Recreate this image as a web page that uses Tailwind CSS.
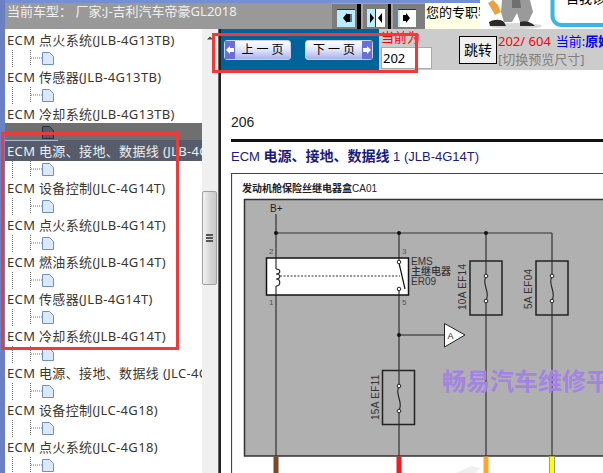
<!DOCTYPE html>
<html>
<head>
<meta charset="utf-8">
<script src="https://cdn.jsdelivr.net/npm/@tailwindcss/browser@4"></script>
</head>
<body class="m-0 bg-white">
<div class="relative w-[603px] h-[473px] overflow-hidden flex flex-col bg-white font-['Noto_Sans','Noto_Sans_CJK_SC',sans-serif]">

  <!-- top bar -->
  <header class="h-[29px] shrink-0 flex">
    <div class="w-[5px] bg-[#6b80c4]"></div>
    <div class="w-[327px] flex flex-col">
      <div class="h-[3px] bg-[#7390d6]"></div>
      <div class="flex-1 bg-[#999999] pl-[2px] text-[13px] leading-[16px] text-[#f0f0f0] whitespace-nowrap">当前车型： 厂家:J-吉利汽车帝豪GL2018</div>
    </div>
    <div class="w-[93px] flex flex-col">
      <div class="h-[3px] bg-[#7390d6]"></div>
      <div class="flex-1 bg-[#a6a6a6] flex pt-[1px] gap-[2px]">
        <div class="w-[29px] h-[25px] flex">
          <div class="w-[25px] bg-[#7d7d7d] pl-[5px] pt-[5px]">
            <svg width="18" height="18" viewBox="0 0 18 18" class="block"><rect width="18" height="18" fill="#b9ecff"/><rect width="18" height="1" fill="#333"/><path d="M6 9l4-5v10zM10 5h3v8h-3z" fill="#000"/><path d="M14 5l0 8" stroke="#000"/></svg>
          </div>
          <div class="w-[4px] bg-black"></div>
        </div>
        <div class="w-[28px] h-[25px] flex">
          <div class="w-[25px] bg-[#7d7d7d] pl-[4px] pt-[5px]">
            <svg width="18" height="18" viewBox="0 0 18 18" class="block"><rect width="9" height="18" fill="#b9ecff"/><rect x="9" width="9" height="18" fill="#fff"/><rect x="8" width="1" height="18" fill="#333"/><path d="M3 4v10l4-5zM15 4v10l-4-5z" fill="#000"/></svg>
          </div>
          <div class="w-[3px] bg-black"></div>
        </div>
        <div class="w-[32px] h-[25px] bg-[#7d7d7d] pl-[5px] pt-[5px]">
          <svg width="18" height="18" viewBox="0 0 18 18" class="block"><rect width="18" height="18" fill="#fff"/><rect width="2" height="18" fill="#b9ecff"/><rect y="0" width="18" height="1" fill="#333"/><path d="M12 9l-4-5v10zM8 6H5v6h3z" fill="#000"/></svg>
        </div>
      </div>
    </div>
    <div class="w-[55px] flex flex-col overflow-hidden">
      <div class="h-[3px] bg-[#7390d6]"></div>
      <div class="flex-1 bg-[#ffffe8] pl-[1px] text-[13px] leading-[18px] text-black whitespace-nowrap">您的专职客服</div>
    </div>
    <div class="flex-1 relative overflow-hidden bg-white">
      <svg width="123" height="29" viewBox="0 0 123 29" class="block">
        <ellipse cx="36" cy="26" rx="26" ry="3" fill="#d8d8d8"/>
        <path d="M22 0h28l3 12-5 10H40l-3-9-5 9H24l-3-10z" fill="#9a9a9a"/>
        <path d="M32 0h8l1 8h-9z" fill="#6f6f6f"/>
        <path d="M8 3l5-3 5 5 3 7-6 3z" fill="#e9a441"/>
        <path d="M9 22c5-3 12-3 15 0l2 4H10zM40 22c5-2 11 0 15 4H40z" fill="#2e2a28"/>
        <rect x="72.500" y="-12" width="60" height="37" rx="9" fill="#fff" stroke="#38b6e8" stroke-width="4"/>
      </svg>
      <span class="absolute left-[86px] top-[-9px] text-[13px] leading-[14px] text-black whitespace-nowrap">自我诊</span>
    </div>
  </header>

  <!-- main -->
  <main class="flex-1 flex min-h-0">
    <div class="w-[5px] bg-[#6b80c4]"></div>

    <!-- tree -->
    <nav class="w-[197px] pt-[1px] overflow-hidden text-[13px] tracking-[0.35px] leading-[20px] text-[#3b3630] whitespace-nowrap">
      <div class="h-[20px] pl-[2px]">ECM 点火系统(JLB-4G13TB)</div>
      <svg width="60" height="17" class="block"><path d="M7.500 0v17M25.500 0v16M26 8h11" stroke="#777" stroke-dasharray="1 1"/><path d="M37.500 2.500h7l4 4v8h-11z" fill="#dce9fb" stroke="#6f8fca"/></svg>
      <div class="h-[20px] pl-[2px]">ECM 传感器(JLB-4G13TB)</div>
      <svg width="60" height="17" class="block"><path d="M7.500 0v17M25.500 0v16M26 8h11" stroke="#777" stroke-dasharray="1 1"/><path d="M37.500 2.500h7l4 4v8h-11z" fill="#dce9fb" stroke="#6f8fca"/></svg>
      <div class="h-[20px] pl-[2px]">ECM 冷却系统(JLB-4G13TB)</div>
      <svg width="197" height="18" viewBox="0 -1 197 18" class="block -mt-[1px] bg-[#6f6f6f]"><path d="M37.500 2.500h7l4 4v8h-11z" fill="#555b68" stroke="#2a3040"/><rect y="16" width="197" height="1" fill="#565c6c"/><rect y="16" width="53" height="1" fill="#a9b6d6"/></svg>
      <div class="h-[20px] pl-[2px] bg-[#565c6c] text-[#f0f0f0]">ECM 电源、接地、数据线 (JLB-4G14T)</div>
      <svg width="60" height="17" class="block"><path d="M7.500 0v17M25.500 0v16M26 8h11" stroke="#777" stroke-dasharray="1 1"/><path d="M37.500 2.500h7l4 4v8h-11z" fill="#dce9fb" stroke="#6f8fca"/></svg>
      <div class="h-[20px] pl-[2px]">ECM 设备控制(JLC-4G14T)</div>
      <svg width="60" height="17" class="block"><path d="M7.500 0v17M25.500 0v16M26 8h11" stroke="#777" stroke-dasharray="1 1"/><path d="M37.500 2.500h7l4 4v8h-11z" fill="#dce9fb" stroke="#6f8fca"/></svg>
      <div class="h-[20px] pl-[2px]">ECM 点火系统(JLB-4G14T)</div>
      <svg width="60" height="17" class="block"><path d="M7.500 0v17M25.500 0v16M26 8h11" stroke="#777" stroke-dasharray="1 1"/><path d="M37.500 2.500h7l4 4v8h-11z" fill="#dce9fb" stroke="#6f8fca"/></svg>
      <div class="h-[20px] pl-[2px]">ECM 燃油系统(JLB-4G14T)</div>
      <svg width="60" height="17" class="block"><path d="M7.500 0v17M25.500 0v16M26 8h11" stroke="#777" stroke-dasharray="1 1"/><path d="M37.500 2.500h7l4 4v8h-11z" fill="#dce9fb" stroke="#6f8fca"/></svg>
      <div class="h-[20px] pl-[2px]">ECM 传感器(JLB-4G14T)</div>
      <svg width="60" height="17" class="block"><path d="M7.500 0v17M25.500 0v16M26 8h11" stroke="#777" stroke-dasharray="1 1"/><path d="M37.500 2.500h7l4 4v8h-11z" fill="#dce9fb" stroke="#6f8fca"/></svg>
      <div class="h-[20px] pl-[2px]">ECM 冷却系统(JLB-4G14T)</div>
      <svg width="60" height="17" class="block"><path d="M7.500 0v17M25.500 0v16M26 8h11" stroke="#777" stroke-dasharray="1 1"/><path d="M37.500 2.500h7l4 4v8h-11z" fill="#dce9fb" stroke="#6f8fca"/></svg>
      <div class="h-[20px] pl-[2px]">ECM 电源、接地、数据线 (JLC-4G14T)</div>
      <svg width="60" height="17" class="block"><path d="M7.500 0v17M25.500 0v16M26 8h11" stroke="#777" stroke-dasharray="1 1"/><path d="M37.500 2.500h7l4 4v8h-11z" fill="#dce9fb" stroke="#6f8fca"/></svg>
      <div class="h-[20px] pl-[2px]">ECM 设备控制(JLC-4G18)</div>
      <svg width="60" height="17" class="block"><path d="M7.500 0v17M25.500 0v16M26 8h11" stroke="#777" stroke-dasharray="1 1"/><path d="M37.500 2.500h7l4 4v8h-11z" fill="#dce9fb" stroke="#6f8fca"/></svg>
      <div class="h-[20px] pl-[2px]">ECM 点火系统(JLC-4G18)</div>
      <svg width="60" height="17" class="block"><path d="M7.500 0v17M25.500 0v16M26 8h11" stroke="#777" stroke-dasharray="1 1"/><path d="M37.500 2.500h7l4 4v8h-11z" fill="#dce9fb" stroke="#6f8fca"/></svg>
    </nav>

    <!-- scrollbar -->
    <div class="w-[16px] bg-[#f0f0f0] flex flex-col items-center">
      <svg width="16" height="17" class="block shrink-0"><path d="M5 10.500l3-3 3 3z" fill="#444"/></svg>
      <div class="mt-[145px] w-[15px] h-[94px] -ml-[1px] border border-[#a0a0a0] rounded-[2px] bg-gradient-to-r from-[#f2f2f2] via-[#d8d8d8] to-[#c8c8c8] flex flex-col justify-center items-center gap-[1px]">
        <div class="w-[7px] h-[2px] bg-[#555]"></div>
        <div class="w-[7px] h-[2px] bg-[#555]"></div>
        <div class="w-[7px] h-[2px] bg-[#555]"></div>
      </div>
    </div>
    <div class="w-[3px] bg-[#222222] border-l border-[#666]"></div>

    <!-- right -->
    <section class="w-[382px] flex flex-col">
      <div class="h-[41px] shrink-0 flex bg-[#cccccc]">
        <div class="w-[158px] bg-[#00649a] flex items-start pl-[3px] pt-[11px] gap-[14px]">
          <button class="w-[67px] h-[20px] rounded-[3px] border border-[#c8d0f0] bg-gradient-to-b from-[#ffffff] via-[#dfe4fb] to-[#a9b2ec] flex items-center text-[12px] leading-[18px] text-black">
            <span class="w-[10px] h-full bg-[#6a6fd8] flex items-center justify-center"><svg width="8" height="8" viewBox="0 0 8 8"><path d="M0 4l4-4v2h4v4H4v2z" fill="#fff"/></svg></span>
            <span class="flex-1 text-center">上 一 页</span>
          </button>
          <button class="w-[68px] h-[20px] rounded-[3px] border border-[#c8d0f0] bg-gradient-to-b from-[#ffffff] via-[#dfe4fb] to-[#a9b2ec] flex items-center text-[12px] leading-[18px] text-black">
            <span class="flex-1 text-center">下 一 页</span>
            <span class="w-[10px] h-full bg-[#6a6fd8] flex items-center justify-center"><svg width="8" height="8" viewBox="0 0 8 8"><path d="M8 4L4 0v2H0v4h4v2z" fill="#fff"/></svg></span>
          </button>
        </div>
        <div class="w-[51px] ml-[2px] flex flex-col">
          <div class="h-[18px] text-[13px] leading-[17px] text-[#ff0000] whitespace-nowrap">当前为</div>
          <div class="h-[22px] bg-white border border-[#aaaaaa] pl-[1px] text-[13px] leading-[20px] text-black">202</div>
        </div>
        <button class="ml-[27px] mt-[7px] w-[38px] h-[28px] bg-[#f0f0f0] border border-black text-[14px] leading-[26px] text-black">跳转</button>
        <div class="ml-[1px] pt-[3px] flex-1 overflow-hidden whitespace-nowrap text-[13px] leading-[18px]">
          <div><span class="text-[#ff0000]">202/ 604</span><span class="text-[#0000ff] ml-[5px]">当前:<b>原始资料</b></span></div>
          <div class="text-[#808080]">[切换预览尺寸]</div>
        </div>
      </div>

      <!-- document -->
      <div class="flex-1 min-h-0 bg-white pl-[10px] overflow-hidden font-['Liberation_Sans','Noto_Sans_CJK_SC',sans-serif]">
        <div class="mt-[42px] h-[20px] text-[14px] leading-[20px] text-[#222]">206</div>
        <div class="mt-[7px] h-[3px] bg-[#111111]"></div>
        <div class="mt-[4px] h-[18px] text-[13px] leading-[18px] text-[#1a1a80] whitespace-nowrap">ECM <b class="text-[14px] font-['Noto_Sans_CJK_SC']">电源、接地、数据线</b> 1 (JLB-4G14T)</div>
        <svg width="372" height="302" viewBox="232 171 372 302" class="block mt-[8px]">
          <path d="M232.500 473V172.500H604" fill="none" stroke="#444" stroke-width="1.200"/>
          <text x="243" y="190.500" font-size="10" font-weight="700" fill="#222" font-family="Noto Sans CJK SC">发动机舱保险丝继电器盒<tspan font-family="Liberation Sans" font-weight="400">CA01</tspan></text>
          <rect x="245.500" y="198.500" width="370" height="256.500" fill="#b0b0b0" stroke="#333" stroke-width="1.500"/>
          <!-- wires out -->
          <rect x="274.500" y="455.500" width="5" height="18" fill="#7b4a25"/>
          <rect x="397.500" y="455.500" width="5" height="18" fill="#ee1c25"/>
          <rect x="484.500" y="455.500" width="5" height="18" fill="#ffa52c"/>
          <rect x="550.500" y="455.500" width="5" height="18" fill="#ffff00"/>
          <path d="M550.500 455v18M555.500 455v18" stroke="#999" stroke-width="1"/>
          <path d="M455 473l17-8 9 2-5 6z" fill="#efefef"/>
          <!-- lines -->
          <path d="M277 213V455M400 232V455M487 232V455M553 232V455M277 232H553" fill="none" stroke="#333" stroke-width="1.200"/>
          <circle cx="277" cy="232" r="2" fill="#111"/><circle cx="400" cy="232" r="2" fill="#111"/><circle cx="487" cy="232" r="2" fill="#111"/><circle cx="400" cy="334" r="2" fill="#111"/>
          <path d="M400 334H445" stroke="#222"/>
          <path d="M445.500 322.500V346L466 334z" fill="#fff" stroke="#222"/>
          <text x="448.500" y="338" font-size="9" fill="#222">A</text>
          <text x="271" y="210.500" font-size="10" fill="#222">B+</text>
          <text x="270" y="253" font-size="8" fill="#555">2</text><text x="403" y="253" font-size="8" fill="#555">3</text>
          <text x="270" y="304" font-size="8" fill="#555">1</text><text x="403" y="304" font-size="8" fill="#555">5</text>
          <!-- relay -->
          <rect x="267.500" y="257" width="142" height="37" fill="#fff" stroke="#111" stroke-width="1.500"/>
          <path d="M277 257v11M277 285v9M400 257v4M400 288v6" stroke="#333" stroke-width="1.200"/>
          <path d="M277 268c5 0 5 5 0 5c5 0 5 5 0 5c5 0 5 7 0 7" fill="none" stroke="#222" stroke-width="1.200"/>
          <path d="M281 275H401" stroke="#333" stroke-dasharray="2 1.500"/>
          <path d="M400 262L406 288" stroke="#111" stroke-width="1.200"/>
          <circle cx="400" cy="261" r="1.800" fill="#fff" stroke="#222"/><circle cx="400" cy="288" r="1.800" fill="#fff" stroke="#222"/>
          <text x="412" y="264" font-size="10" fill="#333">EMS</text>
          <text x="412" y="274" font-size="10" font-weight="500" fill="#333" font-family="Noto Sans CJK SC">主继电器</text>
          <text x="412" y="284" font-size="10" fill="#333">ER09</text>
          <!-- fuses -->
          <rect x="471" y="260" width="32" height="54" fill="#b0b0b0" stroke="#222" stroke-width="1.500"/>
          <rect x="537" y="260" width="32" height="54" fill="#b0b0b0" stroke="#222" stroke-width="1.500"/>
          <rect x="383.500" y="369.500" width="32" height="54" fill="#b0b0b0" stroke="#222" stroke-width="1.500"/>
          <path d="M487 260v15M487 300v14M553 260v15M553 300v14M400 369v16M400 410v13" stroke="#333" stroke-width="1.200"/>
          <path d="M487 276c-5 6 5 16 0 23M553 276c-5 6 5 16 0 23M400 386c-5 6 5 16 0 23" fill="none" stroke="#222" stroke-width="1.100"/>
          <circle cx="487" cy="275" r="1.800" fill="#fff" stroke="#222"/><circle cx="487" cy="300" r="1.800" fill="#fff" stroke="#222"/>
          <circle cx="553" cy="275" r="1.800" fill="#fff" stroke="#222"/><circle cx="553" cy="300" r="1.800" fill="#fff" stroke="#222"/>
          <circle cx="400" cy="385" r="1.800" fill="#fff" stroke="#222"/><circle cx="400" cy="410" r="1.800" fill="#fff" stroke="#222"/>
          <text transform="translate(467 309) rotate(-90)" font-size="10" fill="#333" letter-spacing=".3">10A EF14</text>
          <text transform="translate(533 308) rotate(-90)" font-size="10" fill="#333" letter-spacing=".3">5A EF04</text>
          <text transform="translate(380 419) rotate(-90)" font-size="10" fill="#333" letter-spacing=".3">15A EF11</text>
          <text x="443" y="388.500" font-size="24" font-weight="700" fill="#a383e3" font-family="Noto Sans CJK SC">畅易汽车维修平台</text>
        </svg>
      </div>
    </section>
  </main>

  <!-- red annotation frames -->
  <div class="absolute left-[212px] top-[33px] w-[206px] h-[40px] border-[3px] border-[#f03a3a]"></div>
  <div class="absolute left-[1px] top-[132px] w-[178px] h-[218px] border-[3px] border-[#f03a3a]"></div>
</div>
</body>
</html>
